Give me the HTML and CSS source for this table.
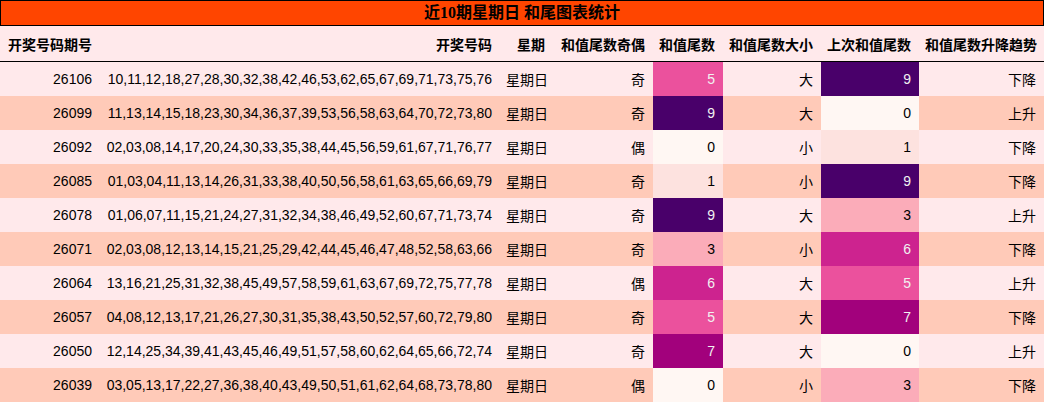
FILE: index.html
```html
<!DOCTYPE html>
<html lang="zh">
<head>
<meta charset="utf-8">
<link rel="stylesheet" href="styles.css">
</head>
<body>
<div class="wrap">
  <div class="title">近10期星期日 和尾图表统计</div>
  <table class="stats">
    <colgroup>
      <col class="c-issue"><col class="c-nums"><col class="c-day"><col class="c-oe"><col class="c-tail"><col class="c-bs"><col class="c-prev"><col class="c-trend">
    </colgroup>
    <thead>
      <tr><th>开奖号码期号</th><th>开奖号码</th><th>星期</th><th>和值尾数奇偶</th><th>和值尾数</th><th>和值尾数大小</th><th>上次和值尾数</th><th>和值尾数升降趋势</th></tr>
    </thead>
    <tbody>
      <tr><td>26106</td><td>10,11,12,18,27,28,30,32,38,42,46,53,62,65,67,69,71,73,75,76</td><td>星期日</td><td>奇</td><td class="g5">5</td><td>大</td><td class="g9">9</td><td>下降</td></tr>
      <tr><td>26099</td><td>11,13,14,15,18,23,30,34,36,37,39,53,56,58,63,64,70,72,73,80</td><td>星期日</td><td>奇</td><td class="g9">9</td><td>大</td><td class="g0">0</td><td>上升</td></tr>
      <tr><td>26092</td><td>02,03,08,14,17,20,24,30,33,35,38,44,45,56,59,61,67,71,76,77</td><td>星期日</td><td>偶</td><td class="g0">0</td><td>小</td><td class="g1">1</td><td>下降</td></tr>
      <tr><td>26085</td><td>01,03,04,11,13,14,26,31,33,38,40,50,56,58,61,63,65,66,69,79</td><td>星期日</td><td>奇</td><td class="g1">1</td><td>小</td><td class="g9">9</td><td>下降</td></tr>
      <tr><td>26078</td><td>01,06,07,11,15,21,24,27,31,32,34,38,46,49,52,60,67,71,73,74</td><td>星期日</td><td>奇</td><td class="g9">9</td><td>大</td><td class="g3">3</td><td>上升</td></tr>
      <tr><td>26071</td><td>02,03,08,12,13,14,15,21,25,29,42,44,45,46,47,48,52,58,63,66</td><td>星期日</td><td>奇</td><td class="g3">3</td><td>小</td><td class="g6">6</td><td>下降</td></tr>
      <tr><td>26064</td><td>13,16,21,25,31,32,38,45,49,57,58,59,61,63,67,69,72,75,77,78</td><td>星期日</td><td>偶</td><td class="g6">6</td><td>大</td><td class="g5">5</td><td>上升</td></tr>
      <tr><td>26057</td><td>04,08,12,13,17,21,26,27,30,31,35,38,43,50,52,57,60,72,79,80</td><td>星期日</td><td>奇</td><td class="g5">5</td><td>大</td><td class="g7">7</td><td>下降</td></tr>
      <tr><td>26050</td><td>12,14,25,34,39,41,43,45,46,49,51,57,58,60,62,64,65,66,72,74</td><td>星期日</td><td>奇</td><td class="g7">7</td><td>大</td><td class="g0">0</td><td>上升</td></tr>
      <tr><td>26039</td><td>03,05,13,17,22,27,36,38,40,43,49,50,51,61,62,64,68,73,78,80</td><td>星期日</td><td>偶</td><td class="g0">0</td><td>小</td><td class="g3">3</td><td>下降</td></tr>
    </tbody>
  </table>
</div>
</body>
</html>
```

FILE: styles.css
```css
html, body {
  margin: 0;
  padding: 0;
  background: #ffffff;
}

.wrap {
  width: 1044px;
}

.title {
  box-sizing: border-box;
  height: 26px;
  border: 1px solid #000000;
  background: #ff4500;
  color: #000000;
  font-family: "Liberation Serif", "Noto Sans CJK SC", serif;
  font-weight: bold;
  font-size: 16px;
  line-height: 24px;
  text-align: center;
}

.stats {
  width: 1044px;
  table-layout: fixed;
  border-collapse: collapse;
  border-spacing: 0;
  font-family: "Liberation Sans", "Noto Sans CJK SC", sans-serif;
  font-size: 14px;
  color: #000000;
}

.c-issue { width: 100px; }
.c-nums { width: 400px; }
.c-day { width: 53px; }
.c-oe { width: 100px; }
.c-tail { width: 70px; }
.c-bs { width: 98px; }
.c-prev { width: 98px; }
.c-trend { width: 125px; }

.stats th,
.stats td {
  padding: 0 8px 0 6px;
  text-align: right;
  vertical-align: middle;
  white-space: nowrap;
  overflow: hidden;
}

.stats thead tr {
  background: #ffe9eb;
}

.stats th {
  height: 35px;
  font-weight: bold;
  border-bottom: 1px solid #000000;
}

.stats td {
  height: 34px;
}

.stats tbody tr:nth-child(odd) {
  background: #ffe9eb;
}

.stats tbody tr:nth-child(even) {
  background: #ffcab8;
}

.stats td.g0 { background: #fff7f3; color: #000000; }
.stats td.g1 { background: #fde2df; color: #000000; }
.stats td.g3 { background: #fbacb9; color: #000000; }
.stats td.g5 { background: #eb519d; color: #f1f1f1; }
.stats td.g6 { background: #cd238f; color: #f1f1f1; }
.stats td.g7 { background: #a2017c; color: #f1f1f1; }
.stats td.g9 { background: #49006a; color: #f1f1f1; }
```
